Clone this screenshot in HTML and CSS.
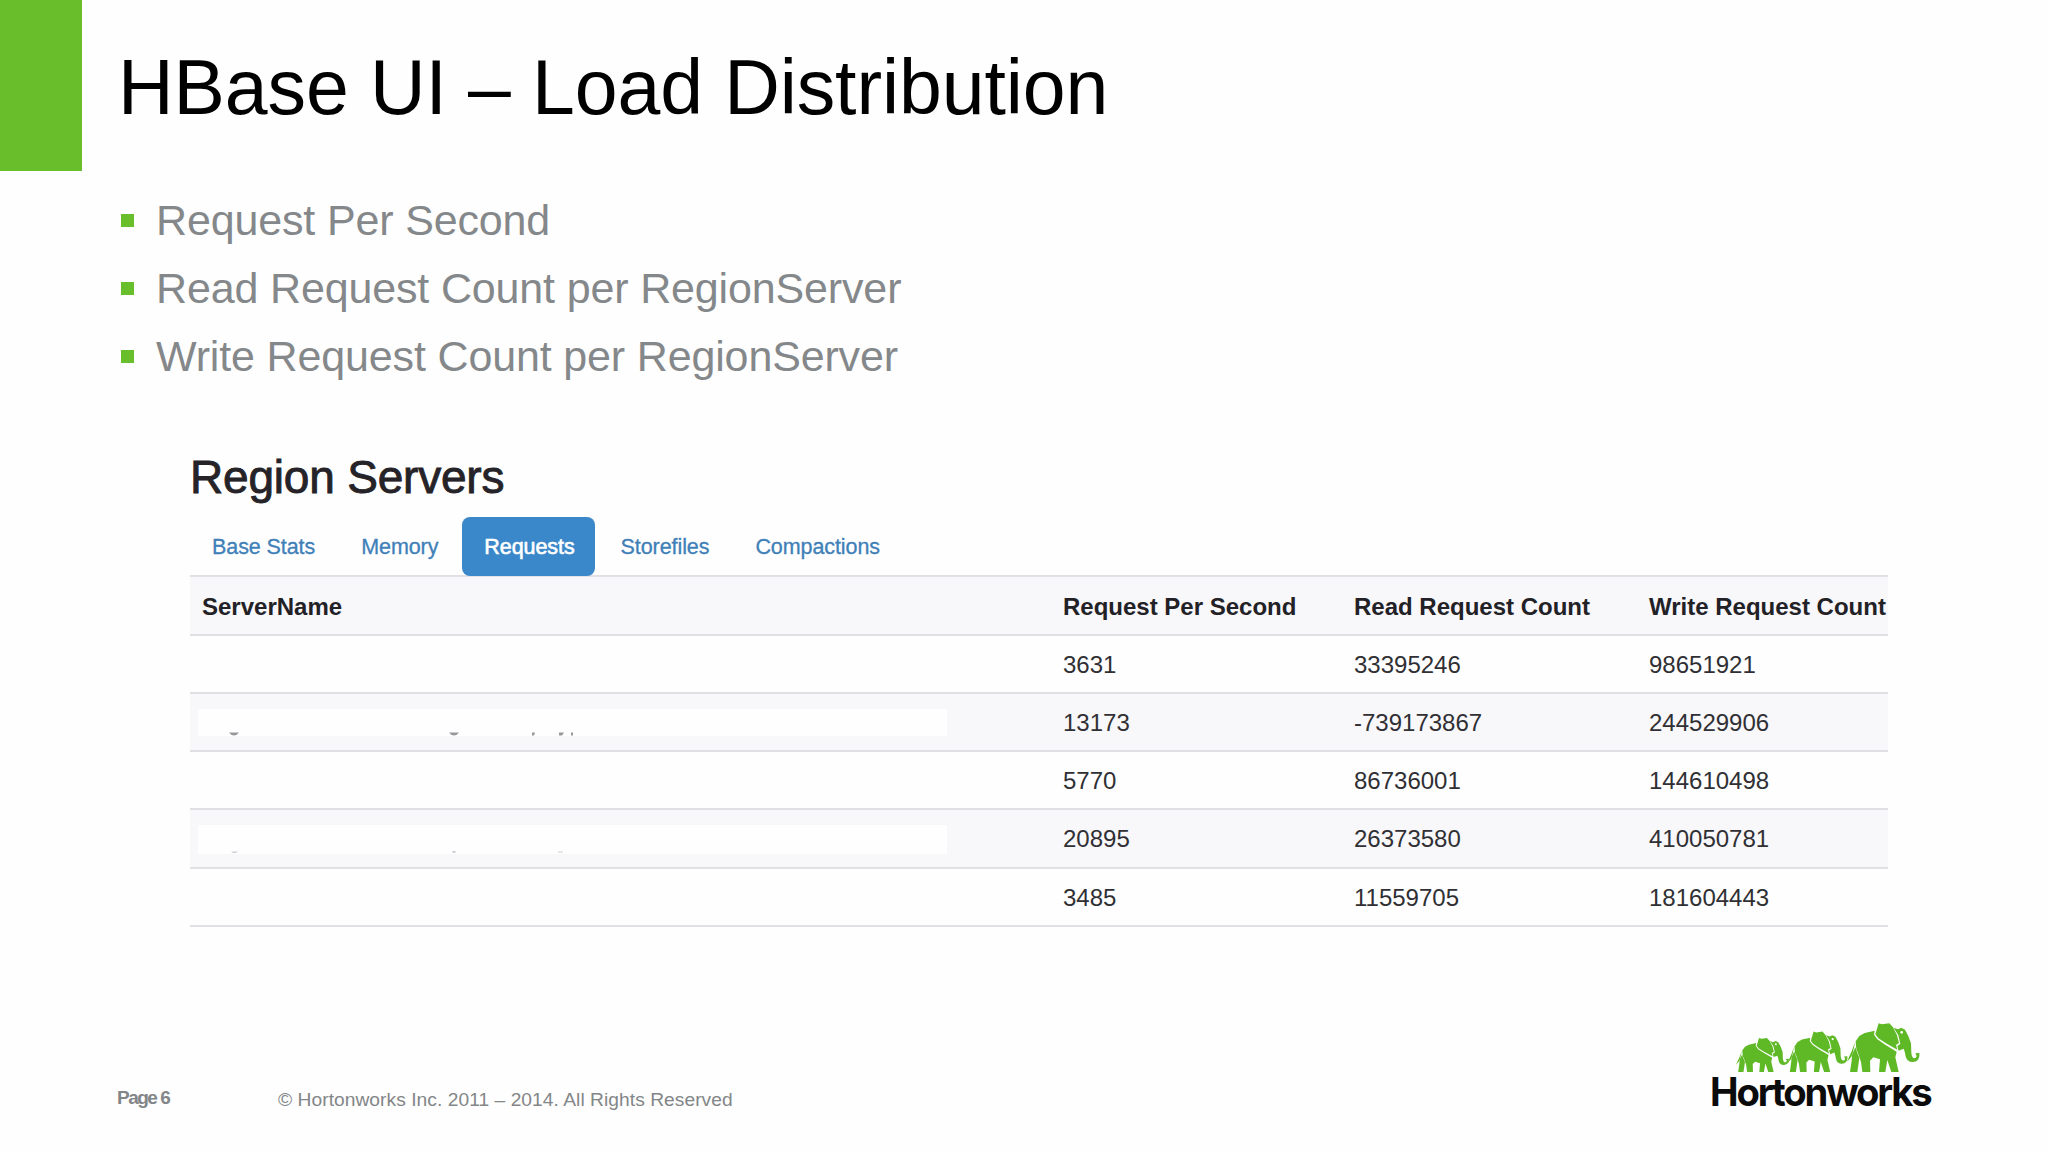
FILE: index.html
```html
<!DOCTYPE html>
<html lang="en">
<head>
    <meta charset="utf-8">
    <title>HBase UI – Load Distribution</title>
    <link rel="stylesheet" href="styles.css">
</head>
<body>
    <header>
        <div class="green-block"></div>
        <h1>HBase UI – Load Distribution</h1>
    </header>

    <ul class="bullets">
        <li>Request Per Second</li>
        <li>Read Request Count per RegionServer</li>
        <li>Write Request Count per RegionServer</li>
    </ul>

    <section class="region-servers">
        <h2>Region Servers</h2>
        <nav class="tabs">
            <a>Base Stats</a>
            <a>Memory</a>
            <a class="active">Requests</a>
            <a>Storefiles</a>
            <a>Compactions</a>
        </nav>
        <table>
            <thead>
                <tr>
                    <th class="name">ServerName</th>
                    <th class="rps">Request Per Second</th>
                    <th class="read">Read Request Count</th>
                    <th class="write">Write Request Count</th>
                </tr>
            </thead>
            <tbody>
                <tr><td></td><td>3631</td><td>33395246</td><td>98651921</td></tr>
                <tr>
                    <td>
                        <svg class="mask" width="749" height="27" viewBox="0 0 749 27">
                            <rect width="749" height="27" fill="#fefefe"/>
                            <g fill="#99979b">
                                <path d="M31 23.5h10q-2 3-5 3t-5-3zM251 23.5h10q-2 3-5 3t-5-3z"/>
                                <path d="M334 23.5h3l-1 3h-2zM361 23.5h5l-2 3h-3zM373 23.5h2v3h-2z"/>
                            </g>
                        </svg>
                    </td>
                    <td>13173</td><td>-739173867</td><td>244529906</td>
                </tr>
                <tr><td></td><td>5770</td><td>86736001</td><td>144610498</td></tr>
                <tr>
                    <td>
                        <svg class="mask" width="749" height="29" viewBox="0 0 749 29">
                            <rect width="749" height="29" fill="#fefefe"/>
                            <g fill="#cfcdd1">
                                <path d="M33 26.5h7l-2 1.5h-3zM254 26h4l-1 2h-2zM360 26.5h5v1h-5z"/>
                            </g>
                        </svg>
                    </td>
                    <td>20895</td><td>26373580</td><td>410050781</td>
                </tr>
                <tr><td></td><td>3485</td><td>11559705</td><td>181604443</td></tr>
            </tbody>
        </table>
    </section>

    <footer>
        <span class="page">Page 6</span>
        <span class="copyright">© Hortonworks Inc. 2011 – 2014. All Rights Reserved</span>
        <div class="logo">
            <svg width="188" height="52" viewBox="135 65 564 156">
                <defs>
                    <g id="elephant">
                        <!-- body and legs -->
                        <path d="M497 126 L508 110 L524 101 L554 94 L552 106 L562 120 L588 138 L620 157 L616 174 L626 218 L604 218 L592 182 L586 218 L567 218 L570 180 L550 174 L540 184 L541 218 L517 218 L513 188 L503 158 L499 150 Z"/>
                        <!-- near hind leg and tail -->
                        <path d="M496 144 L508 176 L502 218 L480 218 L485 184 L486 166 Z"/>
                        <path d="M495 128 L489 158 L484 172 L471 187 L478 171 L485 156 Z"/>
                        <!-- head and trunk -->
                        <path d="M611 85 L624 90 L634 85 L645 91 L655 110 L663 132 L664 160 C665 179 677 181 680 170 L676 162 L688 161 C690 179 681 189 666 188 C653 187 647 178 645 160 L641 148 L626 154 L622 140 L631 134 L625 108 Z"/>
                        <!-- ear -->
                        <path d="M566 72 L576 75 L598 72 L609 84 L621 108 L627 131 L618 137 L622 151 L588 132 L565 117 L556 105 Z"/>
                        <circle class="eye" cx="635" cy="99" r="4"/>
                    </g>
                </defs>
                <use href="#elephant" transform="translate(-206 65.4) scale(.73 .7)"/>
                <use href="#elephant" transform="translate(-99 37) scale(.83)"/>
                <use href="#elephant"/>
            </svg>
            <div class="wordmark">Hortonworks</div>
        </div>
    </footer>
</body>
</html>
```
FILE: styles.css
```css
* {
    box-sizing: border-box;
}

body {
    margin: 0;
    width: 2048px;
    height: 1152px;
    overflow: hidden;
    background-color: #fefefe;
    font-family: "Liberation Sans", Arial, sans-serif;
    display: flex;
    flex-direction: column;
}

header {
    display: flex;
    height: 171px;
    background-color: #fdfefd;
}

.green-block {
    width: 82px;
    background-color: #69be2c;
}

h1 {
    margin: 0;
    padding: 3px 0 0 36px;
    font-size: 77px;
    font-weight: normal;
    line-height: 168px;
    letter-spacing: -0.1px;
    color: #000;
}

.bullets {
    margin: 15px 0 0;
    padding: 0 0 0 121px;
    list-style: none;
    font-size: 43px;
    line-height: 68px;
    letter-spacing: -0.15px;
    color: #85888a;
}

.bullets li {
    display: flex;
    align-items: center;
}

.bullets li::before {
    content: "";
    width: 13px;
    height: 13px;
    margin-right: 22px;
    background-color: #69be2c;
}

/* region servers panel */
.region-servers {
    width: 1698px;
    margin: 62px 0 0 190px;
}

h2 {
    margin: 0 0 15px;
    font-size: 46px;
    font-weight: normal;
    line-height: 50px;
    letter-spacing: -0.2px;
    color: #252328;
    -webkit-text-stroke: 0.9px #252328;
}

.tabs {
    display: flex;
    gap: 4px;
    height: 59px;
    margin-bottom: -1px;
}

.tabs a {
    padding: 0 20px 0 22px;
    font-size: 21.5px;
    line-height: 61px;
    letter-spacing: -0.08px;
    color: #3f80b8;
    -webkit-text-stroke: 0.3px;
}

.tabs .active {
    position: relative;
    border-radius: 8px;
    background-color: #3a87c9;
    color: #fff;
    -webkit-text-stroke: 0.6px;
}

table {
    width: 1698px;
    table-layout: fixed;
    border-collapse: separate;
    border-spacing: 0;
    border-bottom: 2px solid #e2e0e4;
    font-size: 24px;
    color: #303034;
}

th,
td {
    height: 58px;
    padding: 1px 0 0 12px;
    border-top: 2px solid #e2e0e4;
    text-align: left;
    white-space: nowrap;
}

th {
    height: 59px;
    padding-top: 2px;
    color: #222126;
}

thead tr,
tbody tr:nth-child(even) {
    background-color: #f8f7fa;
}

tbody tr:nth-child(4) td {
    height: 59px;
}

td:first-child {
    padding-left: 8px;
}

.name {
    width: 861px;
}

.rps {
    width: 291px;
}

.read {
    width: 295px;
}

.mask {
    display: block;
}

/* footer */
footer {
    display: flex;
    align-items: flex-start;
    margin-top: 94px;
    padding-left: 117px;
    color: #838688;
}

.page {
    width: 161px;
    padding-top: 65px;
    font-size: 19px;
    font-weight: bold;
    line-height: 24px;
    letter-spacing: -1.5px;
}

.copyright {
    width: 1432px;
    padding-top: 67px;
    font-size: 19.2px;
    line-height: 24px;
    letter-spacing: 0.05px;
}

.logo svg {
    display: block;
    margin-left: 25px;
    fill: #5fb927;
}

.eye {
    fill: #fefefe;
}

.wordmark {
    font-family: Inter, sans-serif;
    font-size: 39px;
    font-weight: 700;
    line-height: 38px;
    letter-spacing: -2.2px;
    color: #0b0b0b;
    transform: scaleX(0.98);
    transform-origin: left;
}
```
